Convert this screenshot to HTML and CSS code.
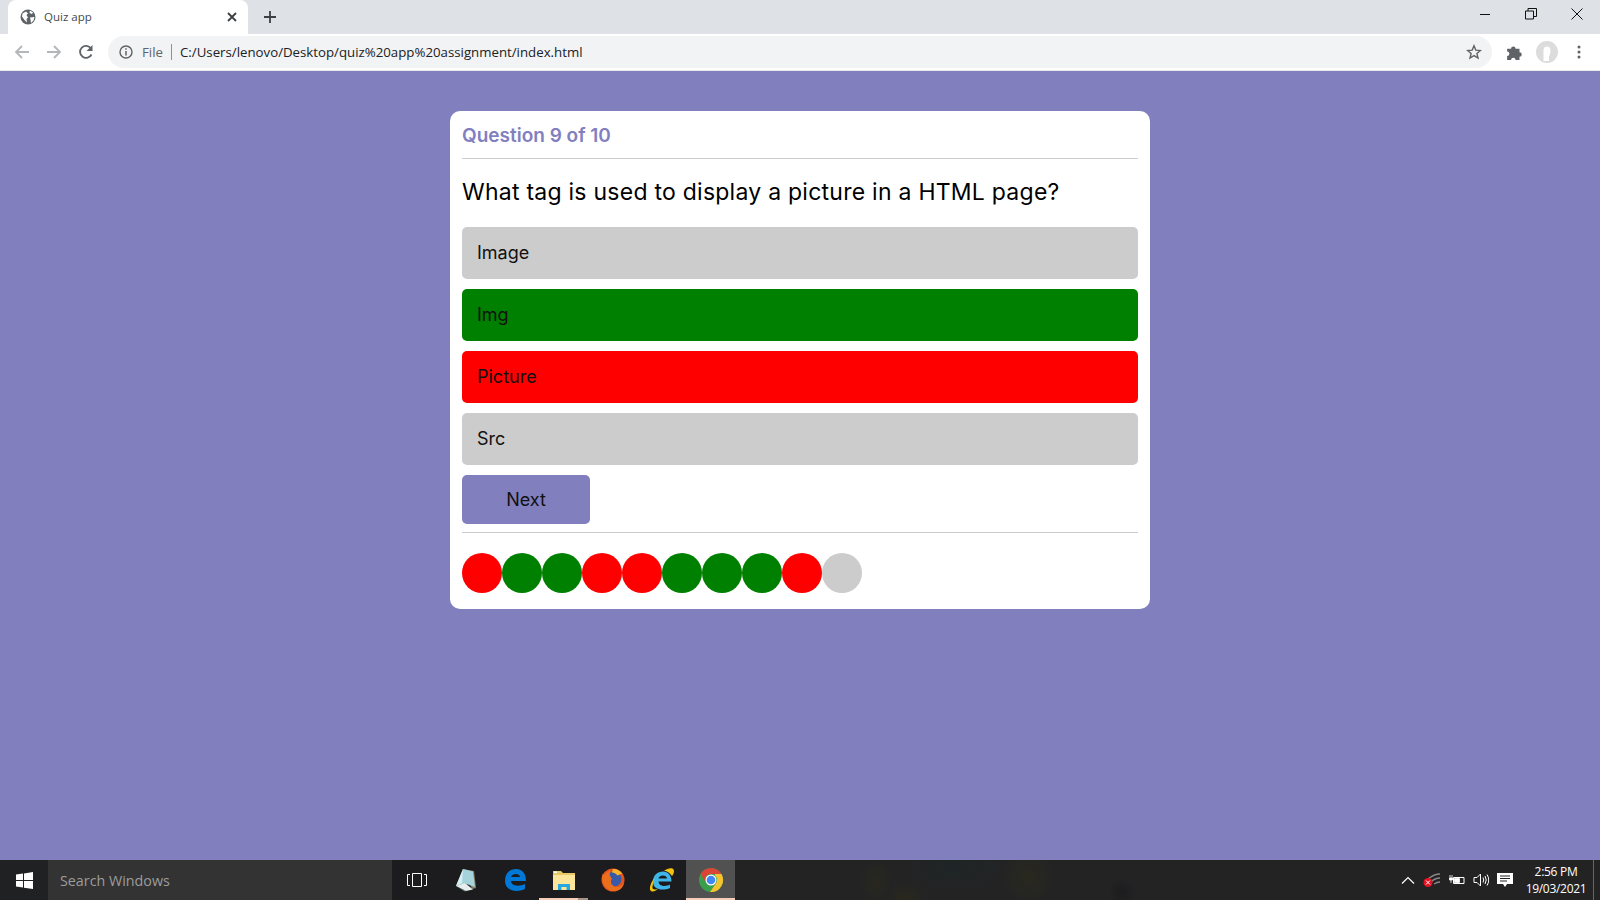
FILE: index.html
```html
<!DOCTYPE html>
<html lang="en">
<head>
<meta charset="utf-8">
<title>Quiz app</title>
<link rel="stylesheet" href="styles.css">
</head>
<body>
<header class="chrome">
  <div class="tabstrip">
    <div class="tab">
      <svg class="globe" width="16" height="16" viewBox="0 0 16 16"><circle cx="8" cy="8" r="7.500" fill="#5f6368"/><path d="M2.500 4.500 6 2.500l2 2-1.500 1.500 1.500 2.500-1.500 1.500.5 3.500-2.500-2.500L2 7.500ZM10 1.500l3 2-1 1.500-2.500-1ZM10 8.500l4.500-.5-1 3.500-2.500 2.500-.5-3.500Z" fill="#fff"/></svg>
      <span class="tab-title">Quiz app</span>
      <svg class="tab-close" width="10" height="10" viewBox="0 0 10 10"><path d="M1 1l8 8M9 1 1 9" stroke="#3c4043" stroke-width="1.800"/></svg>
    </div>
    <svg class="newtab" width="14" height="14" viewBox="0 0 14 14"><path d="M7 1v12M1 7h12" stroke="#3c4043" stroke-width="1.800"/></svg>
    <div class="winbtns">
      <svg width="12" height="12" viewBox="0 0 12 12"><path d="M1 6.500h10" stroke="#111" stroke-width="1"/></svg>
      <svg width="12" height="12" viewBox="0 0 12 12"><path d="M.5 3h8v8h-8zM3 3V.5h8.500v8H8.500" fill="none" stroke="#111" stroke-width="1"/></svg>
      <svg width="12" height="12" viewBox="0 0 12 12"><path d="M.5.5l11 11M11.500.5l-11 11" stroke="#111" stroke-width="1"/></svg>
    </div>
  </div>
  <div class="toolbar">
    <svg class="nav" width="16" height="16" viewBox="0 0 16 16"><path d="M15 8H2M8 2 2 8l6 6" fill="none" stroke="#b4b6b9" stroke-width="1.800"/></svg>
    <svg class="nav" width="16" height="16" viewBox="0 0 16 16"><path d="M1 8h13M8 2l6 6-6 6" fill="none" stroke="#b4b6b9" stroke-width="1.800"/></svg>
    <svg class="nav" width="16" height="16" viewBox="0 0 16 16"><path d="M13.500 10.500A6 6 0 1 1 13 4.500" fill="none" stroke="#5f6368" stroke-width="1.800"/><path d="M14.500 1v6h-6z" fill="#5f6368"/></svg>
    <div class="omnibox">
      <svg width="14" height="14" viewBox="0 0 14 14"><circle cx="7" cy="7" r="6" fill="none" stroke="#5f6368" stroke-width="1.400"/><path d="M7 6v4.500M7 3.200v1.600" stroke="#5f6368" stroke-width="1.500"/></svg>
      <span class="scheme">File</span>
      <span class="url">C:/Users/lenovo/Desktop/quiz%20app%20assignment/index.html</span>
      <svg class="star" width="16" height="16" viewBox="0 0 16 16"><path d="M8 1.800l1.800 4.300 4.600.4-3.500 3 1.100 4.500L8 11.600l-4 2.400 1.100-4.500-3.500-3 4.600-.4z" fill="none" stroke="#5f6368" stroke-width="1.400"/></svg>
    </div>
    <svg class="puzzle" width="18" height="18" viewBox="0 0 16 16"><path d="M1 5h3.500a2 2 0 1 1 4 0H12v3.300a2 2 0 1 1 0 4V15H8.500a2 2 0 1 0-4 0H1v-3.500a2 2 0 1 0 0-4z" fill="#5f6368"/></svg>
    <span class="avatar"><svg width="22" height="22" viewBox="0 0 22 22"><circle cx="11" cy="11" r="11" fill="#dcdcdc"/><path d="M7.500 20V9.500a3.500 4 0 0 1 7 0q0 4-1.500 6V20z" fill="#fff"/></svg></span>
    <svg class="kebab" width="4" height="14" viewBox="0 0 4 14"><circle cx="2" cy="2" r="1.500" fill="#5f6368"/><circle cx="2" cy="7" r="1.500" fill="#5f6368"/><circle cx="2" cy="12" r="1.500" fill="#5f6368"/></svg>
  </div>
</header>

<main class="page">
  <section class="card">
    <h2 class="count">Question 9 of 10</h2>
    <h1 class="question">What tag is used to display a picture in a HTML page?</h1>
    <div class="options">
      <div class="option">Image</div>
      <div class="option right">Img</div>
      <div class="option wrong">Picture</div>
      <div class="option">Src</div>
    </div>
    <button class="next">Next</button>
    <div class="dots">
      <span class="dot wrong"></span><span class="dot right"></span><span class="dot right"></span><span class="dot wrong"></span><span class="dot wrong"></span><span class="dot right"></span><span class="dot right"></span><span class="dot right"></span><span class="dot wrong"></span><span class="dot"></span>
    </div>
  </section>
</main>

<footer class="taskbar">
  <div class="start"><svg width="17" height="17" viewBox="0 0 17 17"><path d="M0 2.500 7 1.500V8H0zM8 1.400 17 0v8H8zM0 9h7v6.500l-7-1zM8 9h9v8l-9-1.300z" fill="#fff"/></svg></div>
  <div class="search">Search Windows</div>
  <div class="tray-icons">
    <div class="tb"><svg width="20" height="14" viewBox="0 0 20 14"><path d="M5.500.5h9v13h-9z" fill="none" stroke="#fff"/><path d="M3 1.500H.5v11H3M17 1.500h2.500v11H17" fill="none" stroke="#fff"/></svg></div>
    <div class="tb"><svg width="24" height="24" viewBox="0 0 24 24"><path d="M9 1l11 2 2 17-4 1z" fill="#8c7d68"/><path d="M9 1l10 2.500 2 15.500-10-3.500L2 18z" fill="#a5d3dc"/><path d="M9 1 2 18l6-3z" fill="#d9eef2"/><path d="M2 18l9-3 8 6.500-7 1.500z" fill="#e8eeee"/><path d="M2 18l10 5-1 .5z" fill="#7d9aa0"/></svg></div>
    <div class="tb"><svg width="24" height="24" viewBox="0 0 24 24"><path d="M2 13C2 5 7 1 13 1c6 0 10 4 10 12H8c0 5 8 6 14 3v5c-8 4-20 2-20-8zM8 9h9c0-4-8-4-9 0z" fill="#0078d7"/></svg></div>
    <div class="tb open"><svg width="22" height="20" viewBox="0 0 22 20"><path d="M0 1h8l2 2h12v17H0z" fill="#e9c866"/><path d="M0 5h22v15H0z" fill="#fbe69a"/><path d="M1 1.500h3v1.500H1z" fill="#fff"/><path d="M5 14h12v6h-3.500v-3h-5v3H5z" fill="#29a8e0"/></svg></div>
    <div class="tb"><svg width="24" height="24" viewBox="0 0 24 24"><circle cx="12" cy="12" r="11.500" fill="#e2541c"/><circle cx="13" cy="11" r="7.500" fill="#3a5aa8"/><path d="M1 9c0 9 6 14 12 14 5 0 9-3 10-8-2 3-6 5-9.500 3.500C10 17 9 13 11 10.500 9 9 8 6 9.500 2.500 6 3.500 4 5.500 3 7.500 2 7 2 6.500 2 5.500 1.500 6.500 1 8 1 9z" fill="#ea6e1c"/><path d="M12 1c4 0 7 1.500 9 4.500l-4.500 2C15 5.500 13 4.500 11 4.500z" fill="#f6b62c"/></svg></div>
    <div class="tb"><svg width="26" height="26" viewBox="0 0 26 26"><path d="M4 15C4 8 8.500 4.500 14 4.500c5 0 8.500 4 8.500 10H9.500c0 5 7.500 5.500 11.500 3v3.500C14 24 4 23 4 15zM9.500 11.500H18c0-4-8-4-8.500 0z" fill="#3fb6ea"/><path d="M23.500 1.500c2.500 1.500 1.500 5-.5 7.500-2-3-5-5-8-5.500 3-1.500 6-3 8.500-2zM5.500 10.500C1.500 16-.5 22 2 24c2 1.500 5-.5 7-2-2.500.5-6 1-5.500-2 .2-2 1-6 2-9.500z" fill="#f2c40f"/></svg></div>
    <div class="tb active"><svg width="24" height="24" viewBox="0 0 24 24"><circle cx="12" cy="12" r="12" fill="#3a9f4a"/><path d="M12 0a12 12 0 0 1 10.390 6H12a6 6 0 0 0-5.800 7.500L1.600 6A12 12 0 0 1 12 0z" fill="#db4437"/><path d="M22.390 6A12 12 0 0 1 11 24l6.200-9A6 6 0 0 0 16 7.500L16 6z" fill="#f4c430"/><circle cx="12" cy="12" r="5.500" fill="#fff"/><circle cx="12" cy="12" r="4.300" fill="#4285f4"/></svg></div>
  </div>
  <div class="spacer"></div>
  <div class="systray">
    <svg width="14" height="8" viewBox="0 0 14 8"><path d="M1 7.500l6-6 6 6" fill="none" stroke="#fff" stroke-width="1.200"/></svg>
    <svg width="18" height="14" viewBox="0 0 18 14"><path d="M5 6q6-5 12-5M8 9q4-4 9-4M11 11q3-2 6-2" fill="none" stroke="#888" stroke-width="1.500"/><circle cx="5" cy="9.500" r="4.500" fill="#e81123"/><path d="M3 7.500l4 4M7 7.500l-4 4" stroke="#fff"/></svg>
    <svg width="16" height="12" viewBox="0 0 16 12"><path d="M4.500 3.500h10.500v6H4.500z" fill="none" stroke="#fff"/><path d="M5.500 4.500h5v4h-5zM1 1v3M3 1v3M.5 4h3v2h-3zM2 6v3" fill="#fff" stroke="#fff" stroke-width=".8"/></svg>
    <svg width="16" height="14" viewBox="0 0 16 14"><path d="M1 4.500h3L7.500 1v12L4 9.500H1z" fill="none" stroke="#fff"/><path d="M10 4.500q1.500 2.500 0 5M12 3q2.500 4 0 8M14 1.500q3.500 5.500 0 11" fill="none" stroke="#fff"/></svg>
    <svg width="16" height="16" viewBox="0 0 16 16"><path d="M0 1h16v11H10l-2 3-2-3H0z" fill="#fff"/><path d="M3 4h10M3 6.500h10M3 9h7" stroke="#222" stroke-width="1"/></svg>
  </div>
  <div class="clock"><span>2:56 PM</span><span>19/03/2021</span></div>
  <div class="desktop-peek"></div>
</footer>
</body>
</html>
```

FILE: styles.css
```css
* { box-sizing: border-box; }
html, body { margin: 0; height: 100%; }
body {
  display: flex;
  flex-direction: column;
  height: 900px;
  overflow: hidden;
  background: #827fbf;
  font-family: "Inter", "Liberation Sans", sans-serif;
}

/* browser chrome */
.chrome { flex: none; height: 71px; background: #fff; border-bottom: 1px solid #e8e8ea; }
.tabstrip { height: 34px; background: #dee1e6; display: flex; align-items: center; padding-left: 8px; }
.tab {
  width: 240px; height: 34px; padding: 0 11px 0 12px;
  background: #fff; border-radius: 8px 8px 0 0;
  display: flex; align-items: center; gap: 8px;
}
.globe { flex: none; }
.tab-title { flex: 1; padding-bottom: 1px; font: 11.500px "Open Sans", sans-serif; color: #45494d; }
.newtab { margin-left: 15px; }
.winbtns { margin-left: auto; display: flex; gap: 34px; padding-right: 17px; position: relative; top: -3px; }
.toolbar { height: 36px; display: flex; align-items: center; padding: 0 19px 0 14px; }
.nav { margin-right: 16px; flex: none; }
.nav:nth-child(3) { margin-right: 14px; }
.omnibox {
  flex: 1; height: 32px; background: #f1f3f4; border-radius: 16px;
  display: flex; align-items: center; padding: 0 10px 0 11px;
  font: 13.250px "Open Sans", sans-serif;
}
.scheme { margin-left: 9px; padding-right: 8px; border-right: 1px solid #8e9195; line-height: 16px; color: #5f6368; }
.url { margin-left: 8px; color: #202124; flex: 1; }
.star { flex: none; margin-right: 0; }
.puzzle { margin-left: 14px; flex: none; }
.avatar { margin-left: 12px; display: flex; }
.kebab { margin-left: 19px; flex: none; }

/* quiz */
.page { flex: 1; padding-top: 40px; display: flex; justify-content: center; align-items: flex-start; }
.card { width: 700px; height: 498px; background: #fff; border-radius: 10px; padding: 12px; }
.count {
  margin: 0; height: 36px; padding-top: 1px; border-bottom: 1px solid #ccc;
  font-size: 19px; line-height: 23px; font-weight: 600; color: #827fbf;
}
.question {
  margin: 19px 0 0; font-size: 23px; line-height: 29px; font-weight: 400; color: #000; letter-spacing: .25px;
}
.options { margin-top: 20px; display: flex; flex-direction: column; gap: 10px; }
.option {
  height: 52px; padding: 0 15px 2px; background: #ccc; border-radius: 5px;
  display: flex; align-items: center; font-size: 18px; color: #111;
}
.option.right { background: #008000; }
.option.wrong { background: #f00; }
.next {
  display: block; width: 128px; height: 49px; margin-top: 10px;
  background: #827fbf; border: 0; border-radius: 5px;
  font: 18px "Inter", sans-serif; color: #111;
}
.dots { margin-top: 8px; padding-top: 20px; border-top: 1px solid #ccc; display: flex; }
.dot { width: 40px; height: 40px; border-radius: 50%; background: #ccc; }
.dot.right { background: #008000; }
.dot.wrong { background: #f00; }

/* taskbar */
.taskbar { flex: none; height: 40px; background: #232324; display: flex; align-items: stretch; color: #fff; }
.start { width: 48px; display: flex; align-items: center; justify-content: center; background: #202122; }
.search {
  width: 344px; background: #333; color: #9c9c9c;
  font: 14.300px "Open Sans", sans-serif; display: flex; align-items: center; padding-left: 12px;
}
.tray-icons { display: flex; background: #1c1b1e; }
.tb { width: 49px; display: flex; align-items: center; justify-content: center; position: relative; }
.tb.open::after, .tb.active::after {
  content: ""; position: absolute; left: 0; right: 0; bottom: 0; height: 2px; background: #f6cdb9;
}
.tb.open::after { background: linear-gradient(to right, #f6cdb9 80%, #a89488 80%); }
.tb.active { background: #515151; }
.spacer {
  flex: 1;
  background:
    radial-gradient(ellipse 16px 22px at 141px 22px, #28281e, transparent),
    radial-gradient(ellipse 20px 16px at 170px 38px, #29281d, transparent),
    radial-gradient(ellipse 50px 26px at 219px 6px, #1e2526, transparent),
    radial-gradient(ellipse 26px 30px at 293px 16px, #29291f, transparent),
    radial-gradient(ellipse 14px 14px at 387px 32px, #1c1c1e, transparent);
}
.systray { display: flex; align-items: center; gap: 8px; padding-right: 6px; }
.clock {
  width: 74px; padding-bottom: 1px; display: flex; flex-direction: column; align-items: center; justify-content: center;
  font: 12px/17px "Open Sans", sans-serif; letter-spacing: -.3px; color: #fff;
}
.desktop-peek { width: 7px; border-left: 1px solid #666; }
```
